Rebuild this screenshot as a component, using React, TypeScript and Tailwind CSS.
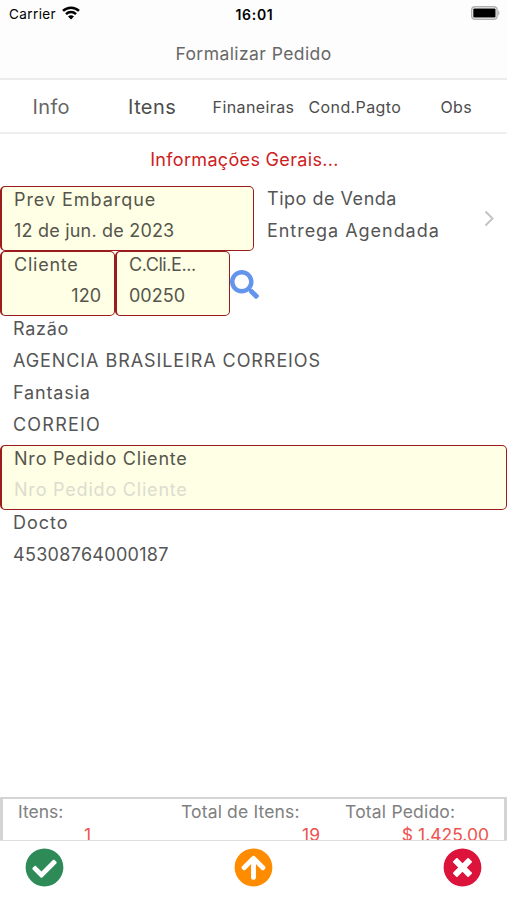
import React from "react";
import {
  FaArrowCircleUp,
  FaCheckCircle,
  FaSearch,
  FaTimesCircle,
} from "react-icons/fa";

const StatusBar = () => (
  <div className="grid h-7 grid-cols-3 items-center pl-[9px] pr-[7px] text-[13.5px] text-black">
    <div className="flex items-center gap-[6px]">
      <span className="tracking-[0.4px]">Carrier</span>
      <svg className="-mt-[2px]" width="18" height="14" viewBox="0 0 18 14" fill="none">
        <path d="M1 4.9a11.6 11.6 0 0 1 16 0" stroke="#000" strokeWidth="2.6" />
        <path d="M4 8.1a7.2 7.2 0 0 1 10 0" stroke="#000" strokeWidth="2.5" />
        <path d="M9 13.6 6 10.6a4.3 4.3 0 0 1 6 0z" fill="#000" />
      </svg>
    </div>
    <span className="text-center text-[14px] font-semibold tracking-[0.7px]">16:01</span>
    <div className="flex justify-end">
      <svg className="-mt-[2px]" width="29" height="14" viewBox="0 0 29 14">
        <rect x="0.7" y="0.7" width="25.4" height="12.6" rx="3.4" fill="#fff" stroke="#b0b0b0" strokeWidth="1.4" />
        <rect x="2.3" y="2.4" width="22.2" height="9.2" rx="1.2" fill="#000" />
        <path d="M27.2 4.6c1.6.6 1.6 4.2 0 4.8z" fill="#b0b0b0" />
      </svg>
    </div>
  </div>
);

const Tabs = () => (
  <nav className="grid h-[54px] grid-cols-5 items-center border-b-2 border-[#efefef] pt-px text-center text-[16px] tracking-[0.4px] whitespace-nowrap text-[#4d4d4d]">
    <span className="pl-px text-[20px] text-[#666]">Info</span>
    <span className="text-[20px]">Itens</span>
    <span>Finaneiras</span>
    <span>Cond.Pagto</span>
    <span>Obs</span>
  </nav>
);

type FieldProps = {
  label: string;
  value: string;
  boxed?: boolean;
  className?: string;
  labelClass?: string;
  valueClass?: string;
};

const Field = ({
  label,
  value,
  boxed,
  className = "",
  labelClass = "",
  valueClass = "",
}: FieldProps) => (
  <div
    className={`${
      boxed
        ? "rounded-[5px] border border-l-2 border-[#9b1c1c] bg-[#ffffe5] pl-[12px] text-[#55554d]"
        : "pl-[13px] text-[#555]"
    } flex h-[64.75px] flex-col text-[18px] whitespace-nowrap ${className}`}
  >
    <span className={`leading-[25px] ${boxed ? "h-[31px]" : "h-8"} ${labelClass}`}>{label}</span>
    <span className={`leading-[26px] ${valueClass}`}>{value}</span>
  </div>
);

const Totals = () => (
  <div className="mt-auto h-[43px] overflow-hidden border-x-[3px] border-t-2 border-[#d4d4d4] bg-white whitespace-nowrap">
    <div className="grid grid-cols-3 text-[#808080]">
      <div className="flex flex-col pl-[15px]">
        <span className="h-[23px] leading-[26px]">Itens:</span>
        <span className="pl-[66px] leading-[26px] text-[#ee5350]">1</span>
      </div>
      <div className="flex flex-col pl-[11px]">
        <span className="h-[23px] leading-[26px] tracking-[0.15px]">Total de Itens:</span>
        <span className="pr-[17px] text-right leading-[26px] text-[#ee5350]">19</span>
      </div>
      <div className="flex flex-col pl-[8px]">
        <span className="h-[23px] leading-[26px] tracking-[0.2px]">Total Pedido:</span>
        <span className="pr-[15px] text-right leading-[26px] text-[#ee5350]">$ 1.425.00</span>
      </div>
    </div>
  </div>
);

const App = () => {
  return (
    <div className="flex h-[900px] w-[507px] flex-col overflow-hidden bg-white font-['Inter',sans-serif] text-[17.5px]">
      {/* Header */}
      <header className="h-20 border-b-2 border-[#ececec] bg-[#fdfdfd]">
        <StatusBar />
        <h1 className="pt-[13px] text-center text-[17.5px] leading-[26px] tracking-[0.42px] text-[#686868]">
          Formalizar Pedido
        </h1>
      </header>
      <Tabs />

      {/* Order form */}
      <h2 className="h-[52px] pt-[13px] pr-[18px] text-center text-[18px] leading-[26px] tracking-[0.33px] text-[#cc2222]">
        Informações Gerais...
      </h2>
      <div className="flex">
        <Field
          boxed
          className="w-[254px]"
          label="Prev Embarque"
          value="12 de jun. de 2023"
          labelClass="tracking-[0.95px]"
          valueClass="tracking-[0.2px]"
        />
        <Field
          className="flex-1"
          label="Tipo de Venda"
          value="Entrega Agendada"
          labelClass="tracking-[0.52px]"
          valueClass="tracking-[0.96px]"
        />
        <svg className="mt-[24px] mr-[12px]" width="11" height="17" viewBox="0 0 11 17" fill="none">
          <path d="m1.5 1.5 7 7-7 7" stroke="#c4c4c4" strokeWidth="2" />
        </svg>
      </div>
      <div className="flex">
        <Field
          boxed
          className="w-[115px]"
          label="Cliente"
          value="120"
          labelClass="tracking-[0.77px]"
          valueClass="pr-[13px] text-right"
        />
        <Field
          boxed
          className="w-[115px]"
          label="C.Cli.E..."
          value="00250"
          labelClass="tracking-[-0.42px]"
        />
        <FaSearch className="mt-[19px] text-[#6495ed]" size={29} />
      </div>
      <Field
        label="Razão"
        value="AGENCIA BRASILEIRA CORREIOS"
        labelClass="tracking-[0.7px]"
        valueClass="tracking-[0.92px]"
      />
      <Field label="Fantasia" value="CORREIO" labelClass="tracking-[0.85px]" valueClass="tracking-[1.22px]" />
      <Field
        boxed
        label="Nro Pedido Cliente"
        value="Nro Pedido Cliente"
        labelClass="tracking-[0.8px]"
        valueClass="tracking-[0.8px] text-[#dcdccf]"
      />
      <Field label="Docto" value="45308764000187" labelClass="tracking-[1px]" valueClass="tracking-[0.3px]" />

      <Totals />

      {/* Actions */}
      <footer className="flex h-[60px] justify-between border-t border-[#dedede] px-[25px] pt-[6.5px]">
        <FaCheckCircle size={39} className="text-[#2e8b57]" />
        <FaArrowCircleUp size={39} className="text-[#ff8c00]" />
        <FaTimesCircle size={39} className="text-[#dc143c]" />
      </footer>
    </div>
  );
};

export default App;
